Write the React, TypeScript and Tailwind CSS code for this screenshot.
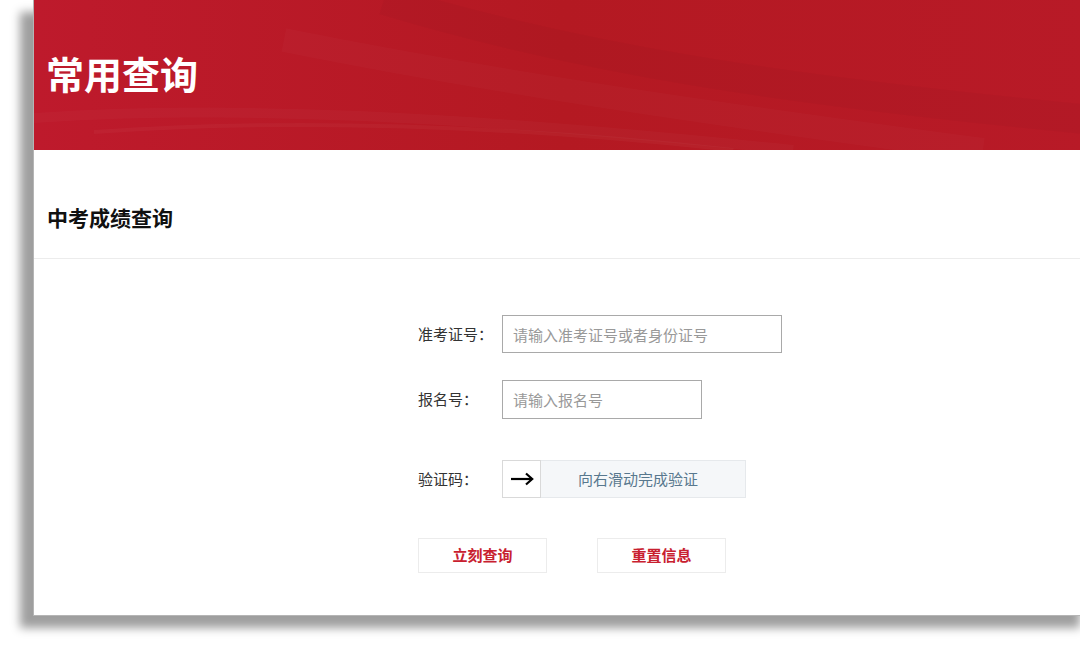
import React from "react";

const font = { fontFamily: '"Noto Sans CJK SC", "Noto Sans", sans-serif' };

export default function App() {
  return (
    <div className="w-[1080px] h-[649px] overflow-hidden bg-white" style={font}>
      <div className="ml-[33px] w-[1060px] h-[616px] bg-white border-l border-b border-[#b5b5b5] shadow-[-13px_12px_9px_rgba(0,0,0,0.38)] flex flex-col">
        <div className="relative h-[150px] shrink-0 bg-gradient-to-r from-[#be1a2c] via-[#b41922] to-[#b81a27] flex items-center pl-[12px] overflow-hidden">
          <svg className="absolute inset-0 w-full h-full" viewBox="0 0 1060 150" preserveAspectRatio="none">
            <path d="M0 118 C 200 105, 420 115, 760 150" stroke="rgba(255,255,255,0.025)" strokeWidth="10" fill="none" />
            <path d="M60 132 C 260 118, 480 126, 700 150" stroke="rgba(255,255,255,0.03)" strokeWidth="4" fill="none" />
            <path d="M250 40 C 450 80, 650 110, 950 150" stroke="rgba(255,255,255,0.02)" strokeWidth="24" fill="none" />
            <path d="M350 0 C 550 60, 750 90, 1060 120" stroke="rgba(0,0,0,0.025)" strokeWidth="30" fill="none" />
          </svg>
          <h1 className="relative text-white text-[38px] font-bold leading-none -mt-[4px]">常用查询</h1>
        </div>
        <div className="h-[109px] shrink-0 border-b border-[#ececec] pl-[13px] pt-[53px]">
          <h2 className="text-[21px] font-bold text-[#111] leading-[28px]">中考成绩查询</h2>
        </div>
        <div className="pl-[384px] pt-[56px] flex flex-col text-[15px]">
          <div className="flex items-center h-[38px]">
            <span className="w-[84px] text-[#333]">准考证号：</span>
            <input
              className="w-[280px] h-[38px] border border-[#a9a9a9] pl-[10px] text-[15px] outline-none placeholder:text-[#999]"
              placeholder="请输入准考证号或者身份证号"
              style={font}
            />
          </div>
          <div className="flex items-center h-[39px] mt-[27px]">
            <span className="w-[84px] text-[#333]">报名号：</span>
            <input
              className="w-[200px] h-[39px] border border-[#a9a9a9] pl-[10px] text-[15px] outline-none placeholder:text-[#999]"
              placeholder="请输入报名号"
              style={font}
            />
          </div>
          <div className="flex items-center h-[38px] mt-[41px]">
            <span className="w-[84px] text-[#333]">验证码：</span>
            <div className="w-[244px] h-[38px] bg-[#f5f7f9] border border-[#e6e9ec] flex items-center">
              <div className="w-[39px] h-[38px] -ml-px -mt-px bg-white border border-[#d9d9d9] flex items-center justify-center">
                <svg width="24" height="14" viewBox="0 0 24 14" fill="none">
                  <path d="M1 7 H22" stroke="#000" strokeWidth="2.2" />
                  <path d="M16 1.5 L22.2 7 L16 12.5" stroke="#000" strokeWidth="2.2" strokeLinejoin="miter" />
                </svg>
              </div>
              <span className="flex-1 text-center text-[#58788e] text-[15px] pr-[10px]">向右滑动完成验证</span>
            </div>
          </div>
          <div className="flex mt-[40px] gap-[50px]">
            <button className="w-[129px] h-[35px] border border-[#ececec] bg-white text-[#c8202f] font-bold text-[15px]" style={font}>
              立刻查询
            </button>
            <button className="w-[129px] h-[35px] border border-[#ececec] bg-white text-[#c8202f] font-bold text-[15px]" style={font}>
              重置信息
            </button>
          </div>
        </div>
      </div>
    </div>
  );
}
